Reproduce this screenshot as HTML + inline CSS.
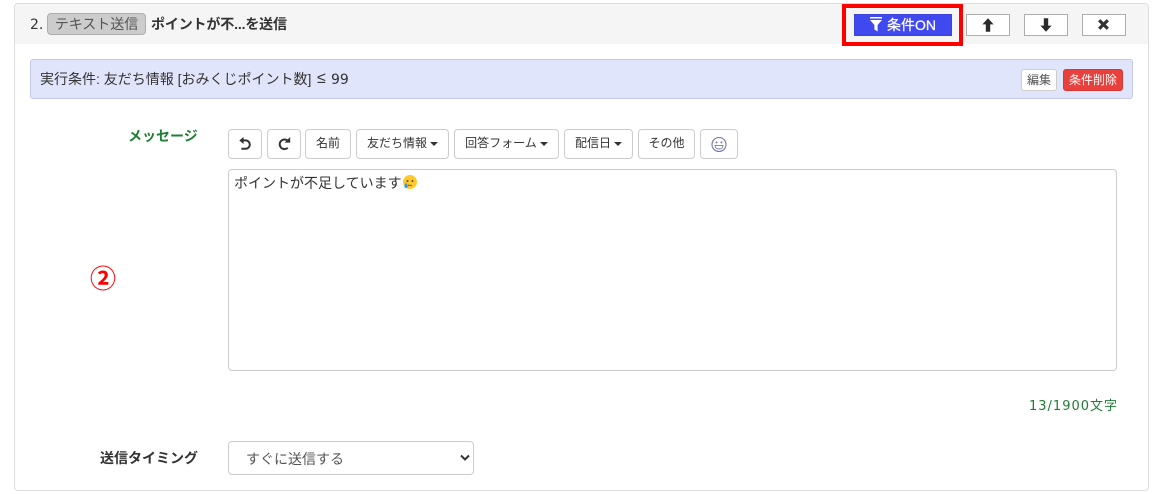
<!DOCTYPE html>
<html lang="ja"><head><meta charset="utf-8">
<style>
html,body{margin:0;padding:0;background:#fff;width:1163px;height:494px;overflow:hidden}
*{box-sizing:border-box}
body{font-family:"Liberation Sans","Noto Sans CJK JP",sans-serif;color:#333;font-size:14px}
.a{position:absolute;white-space:nowrap}
.tb{position:absolute;top:129px;height:30px;border:1px solid #ccc;border-radius:4px;background:#fff;font-size:12px;line-height:27px;text-align:center;color:#333}
.caret{display:inline-block;width:0;height:0;border-left:4px solid transparent;border-right:4px solid transparent;border-top:4px solid #333;vertical-align:middle;margin-left:3px}
.mv{position:absolute;top:14px;width:44px;height:22px;border:1px solid #adadad;background:#fff}
svg{display:block;position:absolute}
</style></head><body>
<div class="a" style="left:14px;top:3px;width:1135px;height:488px;border:1px solid #ddd;border-radius:4px;background:#fff"></div>
<div class="a" style="left:15px;top:4px;width:1133px;height:40px;background:#f5f5f5;border-radius:3px 3px 0 0"></div>

<div class="a" style="left:30px;top:15px;font-size:14px;line-height:20px;font-family:'DejaVu Sans',sans-serif">2.</div>
<div class="a" style="left:47px;top:13px;width:99px;height:22px;background:#ccc;border:1px solid #adadad;border-radius:4px;font-size:14px;line-height:21px;text-align:center;color:#555">テキスト送信</div>
<div class="a" style="left:151px;top:14px;font-size:14px;line-height:20px;font-weight:bold;color:#333;letter-spacing:-.15px">ポイントが不...を送信</div>

<div class="a" style="left:842px;top:4px;width:121px;height:42px;border:4px solid #f00"></div>
<div class="a" style="left:854px;top:14px;width:98px;height:22px;background:#4049f0;border:1px solid #3c44dc;color:#fff;font-size:14px;line-height:20px;padding-left:32px;-webkit-text-stroke:.25px #fff">条件ON</div>
<svg style="left:870px;top:17px" width="12" height="15" viewBox="0 0 12 15"><rect x="0" y="0" width="12" height="1.5" fill="#fff"/><path d="M0 3h12L7.6 8v6.5L4.4 12.5V8z" fill="#fff"/></svg>

<div class="mv" style="left:966px"></div>
<div class="mv" style="left:1024px"></div>
<div class="mv" style="left:1082px"></div>
<svg style="left:982px;top:18px" width="12" height="14" viewBox="0 0 12 14"><path d="M6 .3L11.6 6.4H8.2V13.7H3.8V6.4H.4z" fill="#2b2b2b"/></svg>
<svg style="left:1040px;top:18px" width="12" height="14" viewBox="0 0 12 14"><path d="M6 13.7L11.6 7.6H8.2V.3H3.8V7.6H.4z" fill="#2b2b2b"/></svg>
<svg style="left:1097px;top:18px" width="13" height="13" viewBox="0 0 13 13"><path d="M2.2 2.2L10.8 10.8M10.8 2.2L2.2 10.8" stroke="#333" stroke-width="3.2"/></svg>

<div class="a" style="left:30px;top:59px;width:1103px;height:40px;background:#e1e5fb;border:1px solid #c3c9e8;border-radius:3px"></div>
<div class="a" style="left:40px;top:69px;font-size:14px;line-height:20px;color:#333">実行条件: 友だち情報 [おみくじポイント数]</div>
<div class="a" style="left:317px;top:69px;font-size:16px;line-height:20px;color:#333">≤</div>
<div class="a" style="left:331px;top:70px;font-size:14px;line-height:20px;color:#333;font-family:'DejaVu Sans',sans-serif">99</div>
<div class="a" style="left:1021px;top:69px;width:36px;height:22px;background:#fff;border:1px solid #ccc;border-radius:3px;font-size:12px;line-height:20px;text-align:center;color:#555">編集</div>
<div class="a" style="left:1063px;top:69px;width:60px;height:22px;background:#e8403c;border:1px solid #d93835;border-radius:3px;font-size:12px;line-height:20px;text-align:center;color:#fff">条件削除</div>

<div class="a" style="left:128px;top:126px;font-size:14px;line-height:20px;font-weight:bold;color:#1e7e34">メッセージ</div>

<div class="tb" style="left:228px;width:34px"></div>
<svg style="left:238px;top:137px" width="14" height="14" viewBox="0 0 14 14" fill="none"><path d="M3 3.4H7.6A4.2 4.2 0 0 1 7.6 11.8H3.4" stroke="#333" stroke-width="2"/><path d="M5.6 0L1.4 3.4V3.6L5.6 7z" fill="#333"/></svg>
<div class="tb" style="left:267px;width:34px"></div>
<svg style="left:277px;top:137px" width="14" height="14" viewBox="0 0 14 14" fill="none"><path d="M10.8 3.8A4.8 4.8 0 1 0 10.8 10.8" stroke="#333" stroke-width="2"/><path d="M7.6 5.6h5.6V0z" fill="#333"/></svg>
<div class="tb" style="left:305px;width:46px">名前</div>
<div class="tb" style="left:356px;width:93px">友だち情報<span class="caret"></span></div>
<div class="tb" style="left:454px;width:105px">回答フォーム<span class="caret"></span></div>
<div class="tb" style="left:564px;width:69px">配信日<span class="caret"></span></div>
<div class="tb" style="left:638px;width:57px">その他</div>
<div class="tb" style="left:700px;width:38px"></div>
<svg style="left:711px;top:136px" width="16" height="17" viewBox="0 0 16 17" fill="none"><circle cx="8" cy="8.5" r="7" stroke="#7477a6" stroke-width="1.1"/><circle cx="5.5" cy="6.4" r="1" fill="#7477a6"/><circle cx="10.5" cy="6.4" r="1" fill="#7477a6"/><path d="M4 9.4h8c0 2.4-1.8 3.6-4 3.6s-4-1.2-4-3.6z" stroke="#7477a6" stroke-width=".9"/></svg>

<div class="a" style="left:228px;top:169px;width:889px;height:202px;border:1px solid #ccc;border-radius:4px;background:#fff"></div>
<div class="a" style="left:234px;top:173px;font-size:14px;line-height:20px;color:#333">ポイントが不足しています</div>
<svg style="left:402px;top:175px" width="15" height="15" viewBox="0 0 15 15"><circle cx="8" cy="7" r="7" fill="#fdc92e"/><circle cx="5.5" cy="6" r="1" fill="#6b4a10"/><circle cx="10.5" cy="6" r="1" fill="#6b4a10"/><path d="M6 11c1-1.2 2.8-1.2 3.8 0" stroke="#6b4a10" stroke-width=".9" fill="none"/><path d="M4 7.6c1.2 1.8 1.7 2.8 1.7 3.6a1.7 1.7 0 0 1-3.4 0c0-.8.5-1.8 1.7-3.6z" fill="#2f9be8"/></svg>

<div class="a" style="left:90px;top:261px;font-size:26px;line-height:34px;color:#f00;font-weight:bold;font-family:'Noto Sans CJK JP',sans-serif">②</div>

<div class="a" style="left:1029px;top:397px;font-size:13px;line-height:20px;color:#1e7e34;font-family:'DejaVu Sans','Noto Sans CJK JP',sans-serif;letter-spacing:1px">13/1900文字</div>

<div class="a" style="left:100px;top:448px;font-size:14px;line-height:20px;font-weight:bold;color:#333">送信タイミング</div>
<div class="a" style="left:228px;top:441px;width:246px;height:34px;border:1px solid #ccc;border-radius:4px;background:#fff;font-size:14px;line-height:34px;padding-left:17px;color:#555">すぐに送信する</div>
<svg style="left:460px;top:454px" width="10" height="8" viewBox="0 0 10 8" fill="none"><path d="M1 1.5L5 5.5L9 1.5" stroke="#333" stroke-width="2"/></svg>
</body></html>
